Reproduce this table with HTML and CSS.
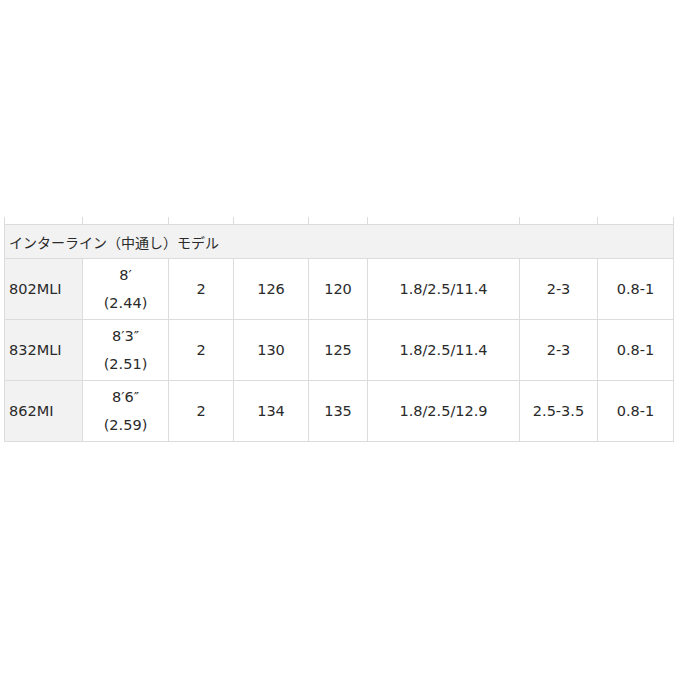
FILE: index.html
```html
<!DOCTYPE html>
<html lang="ja">
<head>
<meta charset="utf-8">
<link rel="stylesheet" href="styles.css">
</head>
<body>
<div class="wrap">
<table class="spec">
  <colgroup>
    <col class="c1"><col class="c2"><col class="c3"><col class="c4"><col class="c5"><col class="c6"><col class="c7"><col class="c8">
  </colgroup>
  <tr class="stub"><td></td><td></td><td></td><td></td><td></td><td></td><td></td><td></td></tr>
  <tr class="group"><td colspan="8">インターライン（中通し）モデル</td></tr>
  <tr>
    <th>802MLI</th><td>8′<br>(2.44)</td><td>2</td><td>126</td><td>120</td><td>1.8/2.5/11.4</td><td>2-3</td><td>0.8-1</td>
  </tr>
  <tr>
    <th>832MLI</th><td>8′3″<br>(2.51)</td><td>2</td><td>130</td><td>125</td><td>1.8/2.5/11.4</td><td>2-3</td><td>0.8-1</td>
  </tr>
  <tr>
    <th>862MI</th><td>8′6″<br>(2.59)</td><td>2</td><td>134</td><td>135</td><td>1.8/2.5/12.9</td><td>2.5-3.5</td><td>0.8-1</td>
  </tr>
</table>
</div>
</body>
</html>
```
FILE: styles.css
```css
html, body {
  margin: 0;
  padding: 0;
  background: #fff;
}
.wrap {
  padding: 217px 0 0 4px;
}
.spec {
  border-collapse: collapse;
  table-layout: fixed;
  width: 669px;
  font-family: "DejaVu Sans", "Noto Sans CJK JP", sans-serif;
  font-size: 14.5px;
  color: #2a2a2a;
}
.c1 { width: 78px; }
.c2 { width: 86px; }
.c3 { width: 65px; }
.c4 { width: 75px; }
.c5 { width: 59px; }
.c6 { width: 152px; }
.c7 { width: 78px; }
.c8 { width: 76px; }
.spec td, .spec th {
  border: 1px solid #dcdcdc;
  padding: 2px 4px;
  line-height: 28px;
  text-align: center;
  font-weight: normal;
}
.spec th {
  text-align: left;
  background: #f2f2f2;
}
.spec .stub td {
  border-top: none;
  height: 7px;
  padding: 0;
  line-height: 0;
}
.spec .group td {
  text-align: left;
  background: #f2f2f2;
  font-family: "Noto Sans CJK JP", sans-serif;
  font-size: 14px;
  padding: 3px 4px 2px;
}
```
